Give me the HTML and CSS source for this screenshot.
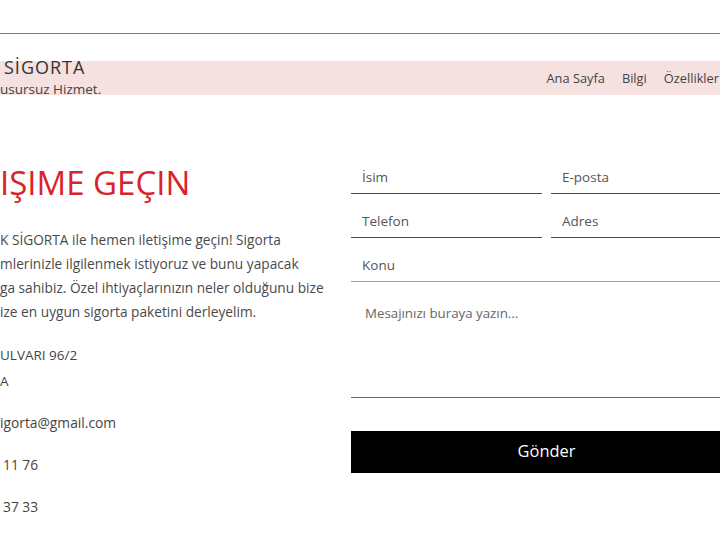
FILE: index.html
```html
<!DOCTYPE html>
<html lang="tr">
<head>
<meta charset="utf-8">
<title>İletişim</title>
<link rel="stylesheet" href="styles.css">
</head>
<body>
<div class="topbar"></div>
<header class="header">
  <div class="logo">
    <div class="logo-title">SİGORTA</div>
    <div class="logo-sub">usursuz Hizmet.</div>
  </div>
  <nav class="nav">
    <a href="#">Ana Sayfa</a>
    <a href="#">Bilgi</a>
    <a href="#">Özellikler</a>
  </nav>
</header>
<main class="main">
  <section class="info">
    <h1 class="title">IŞIME GEÇIN</h1>
    <p class="lead">K SİGORTA ile hemen iletişime geçin! Sigorta<br>mlerinizle ilgilenmek istiyoruz ve bunu yapacak<br>ga sahibiz. Özel ihtiyaçlarınızın neler olduğunu bize<br>ize en uygun sigorta paketini derleyelim.</p>
    <p class="addr">ULVARI 96/2<br>A</p>
    <p class="item">igorta@gmail.com</p>
    <p class="item num">11 76</p>
    <p class="item num">37 33</p>
  </section>
  <form class="form">
    <div class="field"><span>İsim</span></div>
    <div class="field"><span>E-posta</span></div>
    <div class="field"><span>Telefon</span></div>
    <div class="field"><span>Adres</span></div>
    <div class="field wide light"><span>Konu</span></div>
    <div class="field wide message"><span>Mesajınızı buraya yazın...</span></div>
    <button class="send" type="button">Gönder</button>
  </form>
</main>
</body>
</html>
```
FILE: styles.css
```css
html, body {
  margin: 0;
  padding: 0;
  background: #fff;
  overflow: hidden;
}
body {
  font-family: "Open Sans", "Liberation Sans", sans-serif;
  color: #444;
  width: 720px;
  height: 540px;
}
.topbar {
  height: 33px;
  border-bottom: 1px solid #7b7b7b;
}
.header {
  margin-top: 27px;
  height: 34px;
  background: #f6e1e1;
  display: flex;
  align-items: center;
  justify-content: space-between;
}
.logo {
  padding-left: 4px;
  margin-bottom: 4px;
}
.logo-title {
  font-size: 18px;
  line-height: 25px;
  letter-spacing: 1px;
  color: #333;
}
.logo-sub {
  font-size: 13.5px;
  line-height: 18px;
  margin-left: -4px;
  color: #444;
}
.nav {
  display: flex;
  gap: 17px;
  padding-right: 1px;
}
.nav a {
  font-size: 12.8px;
  color: #444;
  text-decoration: none;
}
.main {
  margin-top: 55px;
  display: grid;
  grid-template-columns: 330px 391px;
  column-gap: 21px;
  width: 742px;
}
.title {
  margin: 13px 0 0;
  font-size: 33px;
  line-height: 40px;
  font-weight: 400;
  color: #d9232b;
}
.lead {
  margin: 25px 0 0;
  font-size: 13.7px;
  line-height: 24px;
  color: #4a4a4a;
}
.addr {
  margin: 18px 0 0;
  font-size: 13.5px;
  line-height: 26px;
}
.item {
  margin: 16px 0 0;
  font-size: 13.8px;
  line-height: 26px;
}
.num {
  padding-left: 3px;
}
.form {
  display: grid;
  grid-template-columns: 1fr 1fr;
  column-gap: 9px;
  align-content: start;
}
.field {
  padding: 18px 11px 6px;
  line-height: 19px;
  font-size: 13.5px;
  color: #555;
  border-bottom: 1px solid #4a4a4a;
}
.wide {
  grid-column: 1 / -1;
}
.light {
  border-bottom-color: #a3a3a3;
}
.message {
  height: 93px;
  padding: 22px 14px 0;
  font-size: 13.3px;
  color: #666;
  border-bottom-color: #6b6b6b;
}
.send {
  grid-column: 1 / -1;
  margin-top: 33px;
  height: 42px;
  padding: 0 0 3px;
  border: 0;
  background: #000;
  color: #fff;
  font-family: inherit;
  font-size: 16.4px;
}
```
